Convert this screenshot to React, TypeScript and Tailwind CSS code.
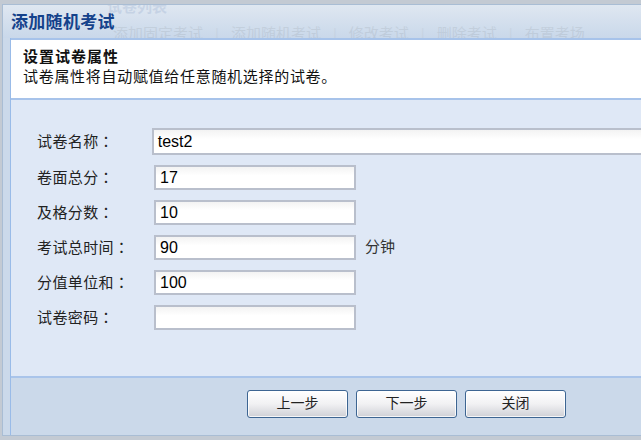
import React from 'react';

const cjk = { fontFamily: '"Liberation Sans", "Noto Sans CJK SC", sans-serif' };
const colonFont = { fontFamily: '"Noto Sans CJK TC", sans-serif' };

const fields = [
  { label: '试卷名称', value: 'test2', wide: true },
  { label: '卷面总分', value: '17' },
  { label: '及格分数', value: '10' },
  { label: '考试总时间', value: '90', unit: '分钟' },
  { label: '分值单位和', value: '100' },
  { label: '试卷密码', value: '' },
];

const ghostTabs = ['添加固定考试', '添加随机考试', '修改考试', '删除考试', '布置考场'];

function Btn({ children }: { children: React.ReactNode }) {
  return (
    <button className="w-[101px] h-[28px] rounded-[3px] border border-[#3d6592] bg-gradient-to-b from-white via-[#f1f1f3] to-[#cfd0d6] text-[14px] text-[#222] shadow-[inset_0_0_0_1px_rgba(255,255,255,0.8)]">
      {children}
    </button>
  );
}

export default function App() {
  return (
    <div className="w-[641px] h-[440px] overflow-hidden bg-[#c3cad3] pl-[2px] pt-[4px]" style={cjk}>
      <div className="w-[660px] h-[432px] flex flex-col bg-[#cbd9ea] border-l border-t border-b border-[#a9bdd4]">
        {/* title bar, with the page behind showing faintly through */}
        <div className="h-[33px] relative bg-gradient-to-b from-[#dfe7f1] to-[#c9d8ea] overflow-hidden">
          <div className="absolute left-[104px] top-[-9px] text-[15px] font-bold text-[#15428b] opacity-10">试卷列表</div>
          <div className="absolute left-[98px] top-[18px] flex items-center text-[15px] text-[#333] opacity-[0.08]">
            {ghostTabs.map((t, i) => (
              <span key={t} className="flex items-center">
                <span className="px-[12px]">{t}</span>
                {i < ghostTabs.length - 1 && <span className="text-[#888]">|</span>}
              </span>
            ))}
          </div>
          <div className="relative pl-[8px] pt-[5px] text-[17px] font-bold text-[#15428b] tracking-[0.3px]">添加随机考试</div>
        </div>

        <div className="ml-[7px] flex flex-col border-l border-[#99bbe8]">
          {/* header */}
          <div className="h-[62px] bg-white border-t-2 border-b-2 border-[#a7c3ea] px-[12px] pt-[7px] text-[15px] leading-[20px] text-[#111]">
            <div className="font-bold tracking-[1px]">设置试卷属性</div>
            <div className="tracking-[0.7px]">试卷属性将自动赋值给任意随机选择的试卷。</div>
          </div>

          {/* body */}
          <div className="h-[278px] bg-[#dfe8f6] border-b-2 border-[#a9c4ea] pt-[28px] pl-[26px] flex flex-col gap-[10px]">
            {fields.map((f) => (
              <div key={f.label} className={`flex items-center ${f.wide ? 'h-[27px]' : 'h-[25px]'}`}>
                <div className="w-[117px] text-[15px] text-[#222] tracking-[0.4px]">
                  {f.label}
                  <span style={colonFont}>：</span>
                </div>
                <div
                  className={`${f.wide ? 'w-[520px] h-[27px]' : 'w-[202px] h-[25px]'} border-2 border-[#b9bfcc] bg-gradient-to-b from-[#f3f3f3] to-white to-[40%] px-[4px] flex items-center text-[16px] text-black`}
                >
                  {f.value}
                </div>
                {f.unit && <div className="ml-[9px] text-[15px] text-[#333]">{f.unit}</div>}
              </div>
            ))}
          </div>

          {/* footer */}
          <div className="h-[57px] flex items-center pl-[236px] gap-[8px] pb-[6px]">
            <Btn>上一步</Btn>
            <Btn>下一步</Btn>
            <Btn>关闭</Btn>
          </div>
        </div>
      </div>
    </div>
  );
}
